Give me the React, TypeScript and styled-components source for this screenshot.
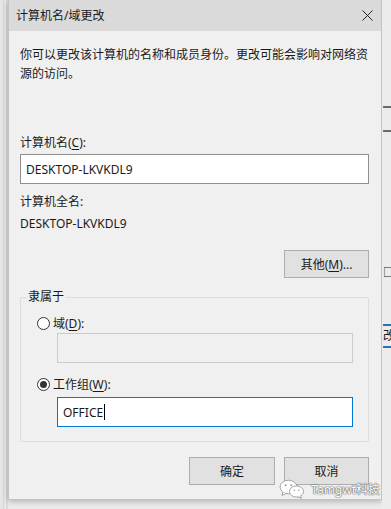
import React from "react";
import styled, { createGlobalStyle } from "styled-components";

const GlobalStyle = createGlobalStyle`
  html, body {
    margin: 0;
    padding: 0;
    background: #e9e9e9;
  }
  body {
    font-family: "Noto Sans", "Noto Sans CJK SC", sans-serif;
    font-size: 12px;
    color: #1a1a1a;
  }
`;

const Page = styled.div`
  position: relative;
  display: flex;
  width: 391px;
  height: 509px;
  overflow: hidden;
  background: #ebebeb;
`;

const LeftEdge = styled.div`
  flex: none;
  width: 8px;
  background: linear-gradient(
    to right,
    #e6e6e6 0 3px,
    #d6d6d6 3px 4px,
    #e9e9e9 4px 6px,
    #dcdcdc 6px 8px
  );
`;

const RightEdge = styled.div`
  flex: 1;
  display: flex;
  flex-direction: column;
  padding-left: 1px;
  background: #ececec;
  overflow: hidden;
`;

const EdgeLine = styled.div<{ $top: number; $color?: string }>`
  margin-top: ${(p) => p.$top}px;
  height: 2px;
  background: ${(p) => p.$color || "#6a6a6a"};
`;

const EdgeGlyph = styled.div<{ $top: number }>`
  margin-top: ${(p) => p.$top}px;
  height: 14px;
  line-height: 14px;
  font-size: 12px;
  white-space: nowrap;
`;

const Dialog = styled.div`
  flex: none;
  box-sizing: border-box;
  width: 374px;
  height: 500px;
  display: flex;
  flex-direction: column;
  background: #f0f0f0;
  border: 1px solid #c4c4c4;
  border-top: none;
  box-shadow: 0 1px 6px rgba(0, 0, 0, 0.28);
`;

const TitleBar = styled.div`
  flex: none;
  height: 31px;
  display: flex;
  align-items: center;
  justify-content: space-between;
  padding: 0 8px 0 7px;
  background: #dadada;
`;

const Title = styled.div`
  font-size: 12px;
  line-height: 16px;
  color: #1a1a1a;
`;

const CloseIcon = () => (
  <svg width="11" height="11" viewBox="0 0 11 11">
    <path d="M0.5 0.5 L10.5 10.5 M10.5 0.5 L0.5 10.5" stroke="#222" strokeWidth="1" />
  </svg>
);

const Body = styled.div`
  flex: 1;
  display: flex;
  flex-direction: column;
  padding: 14px 12px 0 11px;
`;

const Description = styled.div`
  line-height: 19px;
  white-space: nowrap;
`;

const Label = styled.div<{ $top: number }>`
  margin-top: ${(p) => p.$top}px;
  line-height: 16px;
  white-space: nowrap;
`;

const Key = styled.span`
  text-decoration: underline;
  text-underline-offset: 2px;
`;

const TextBox = styled.div<{ $top: number; $state?: "normal" | "disabled" | "focused" }>`
  box-sizing: border-box;
  margin-top: ${(p) => p.$top}px;
  height: 30px;
  display: flex;
  align-items: center;
  padding: 0 5px;
  background: ${(p) => (p.$state === "disabled" ? "#f0f0f0" : "#ffffff")};
  border: 1px solid
    ${(p) =>
      p.$state === "disabled" ? "#cccccc" : p.$state === "focused" ? "#0078d7" : "#8f8f8f"};
  white-space: nowrap;
`;

const Caret = styled.span`
  display: inline-block;
  width: 1px;
  height: 16px;
  margin-left: 1px;
  background: #000;
`;

const Button = styled.div<{ $width: number }>`
  box-sizing: border-box;
  flex: none;
  width: ${(p) => p.$width}px;
  height: 28px;
  display: flex;
  align-items: center;
  justify-content: center;
  background: #e1e1e1;
  border: 1px solid #adadad;
  white-space: nowrap;
`;

const OtherRow = styled.div`
  margin-top: 18px;
  display: flex;
  justify-content: flex-end;
`;

const Group = styled.fieldset`
  margin: 11px 0 0 0;
  padding: 10px 15px 14px 16px;
  border: 1px solid #dcdcdc;
  border-radius: 2px;
  display: flex;
  flex-direction: column;
`;

const Legend = styled.legend`
  margin-left: -11px;
  padding: 0 2px;
  line-height: 16px;
`;

const RadioRow = styled.div<{ $top: number }>`
  margin-top: ${(p) => p.$top}px;
  display: flex;
  align-items: center;
  gap: 3px;
  height: 16px;
  white-space: nowrap;
`;

const RadioCircle = styled.span<{ $checked?: boolean }>`
  box-sizing: border-box;
  flex: none;
  width: 13px;
  height: 13px;
  border-radius: 50%;
  border: 1px solid #333;
  background: #fff;
  display: flex;
  align-items: center;
  justify-content: center;

  &::after {
    content: "";
    display: ${(p) => (p.$checked ? "block" : "none")};
    width: 7px;
    height: 7px;
    border-radius: 50%;
    background: #333;
  }
`;

const Indent = styled.div`
  margin-left: 20px;
  display: flex;
  flex-direction: column;
`;

const Footer = styled.div`
  margin-top: 15px;
  display: flex;
  justify-content: flex-end;
  gap: 9px;
`;

const Watermark = styled.div`
  position: absolute;
  right: 11px;
  bottom: 10px;
  display: flex;
  align-items: center;
  gap: 6px;
  color: #fff;
  font-size: 12px;
  text-shadow: 0 0 1px #555, 0 0 1px #555, 0 0 2px #888;
`;

const WeChatIcon = () => (
  <svg width="26" height="20" viewBox="0 0 26 20">
    <ellipse cx="9.5" cy="8" rx="8.5" ry="6.8" fill="#fff" stroke="#9a9a9a" strokeWidth="0.9" />
    <path d="M4 13 L3 16.5 L7.5 14.2" fill="#fff" stroke="#9a9a9a" strokeWidth="0.9" />
    <circle cx="6.6" cy="6.2" r="1" fill="#9a9a9a" />
    <circle cx="12.2" cy="6.2" r="1" fill="#9a9a9a" />
    <ellipse cx="17.5" cy="12.5" rx="7" ry="5.6" fill="#fff" stroke="#9a9a9a" strokeWidth="0.9" />
    <path d="M21.5 16.6 L22.5 19.3 L18.8 17.8" fill="#fff" stroke="#9a9a9a" strokeWidth="0.9" />
    <circle cx="15.3" cy="11.3" r="0.8" fill="#9a9a9a" />
    <circle cx="19.8" cy="11.3" r="0.8" fill="#9a9a9a" />
  </svg>
);

export default function App() {
  return (
    <>
      <GlobalStyle />
      <Page>
        <LeftEdge />
        <Dialog>
          <TitleBar>
            <Title>计算机名/域更改</Title>
            <CloseIcon />
          </TitleBar>
          <Body>
            <Description>
              你可以更改该计算机的名称和成员身份。更改可能会影响对网络资
              <br />
              源的访问。
            </Description>

            <Label $top={52}>
              计算机名(<Key>C</Key>):
            </Label>
            <TextBox $top={3}>DESKTOP-LKVKDL9</TextBox>

            <Label $top={10}>计算机全名:</Label>
            <Label $top={6}>DESKTOP-LKVKDL9</Label>

            <OtherRow>
              <Button $width={85}>
                其他(<Key>M</Key>)...
              </Button>
            </OtherRow>

            <Group>
              <Legend>隶属于</Legend>
              <RadioRow $top={0}>
                <RadioCircle />
                <span>
                  域(<Key>D</Key>):
                </span>
              </RadioRow>
              <Indent>
                <TextBox $top={2} $state="disabled" />
              </Indent>
              <RadioRow $top={13}>
                <RadioCircle $checked />
                <span>
                  工作组(<Key>W</Key>):
                </span>
              </RadioRow>
              <Indent>
                <TextBox $top={5} $state="focused">
                  OFFICE
                  <Caret />
                </TextBox>
              </Indent>
            </Group>

            <Footer>
              <Button $width={86}>确定</Button>
              <Button $width={85}>取消</Button>
            </Footer>
          </Body>
        </Dialog>
        <RightEdge>
          <EdgeLine $top={106} />
          <EdgeLine $top={22} />
          <EdgeGlyph $top={134}>□</EdgeGlyph>
          <EdgeLine $top={44} $color="#2f6fb6" />
          <EdgeGlyph $top={3}>改(</EdgeGlyph>
          <EdgeLine $top={3} $color="#2f6fb6" />
        </RightEdge>
        <Watermark>
          <WeChatIcon />
          <span>Tamgwt科技</span>
        </Watermark>
      </Page>
    </>
  );
}
